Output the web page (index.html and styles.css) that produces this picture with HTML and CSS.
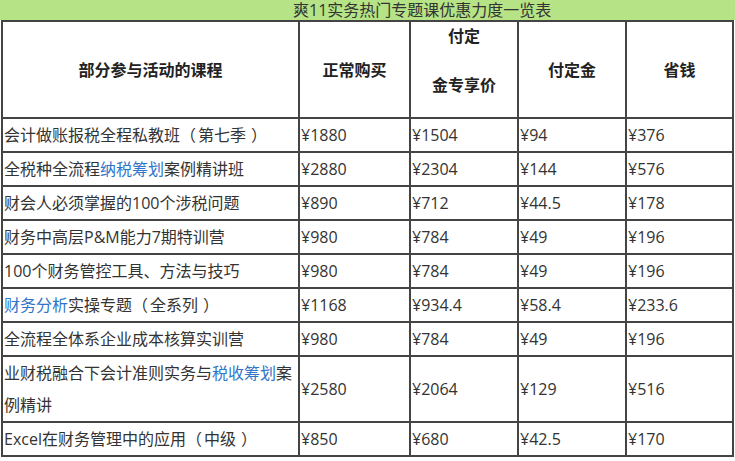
FILE: index.html
```html
<!DOCTYPE html>
<html lang="zh-CN">
<head>
<meta charset="utf-8">
<link rel="stylesheet" href="styles.css">
</head>
<body>
<div class="banner"><span class="banner-text">爽11实务热门专题课优惠力度一览表</span></div>
<table class="price-table">
  <colgroup>
    <col class="c1"><col class="c2"><col class="c3"><col class="c4"><col class="c5">
  </colgroup>
  <thead>
    <tr class="head-row">
      <th>部分参与活动的课程</th>
      <th>正常购买</th>
      <th class="two-line"><div class="l1">付定</div><div class="l2">金专享价</div></th>
      <th>付定金</th>
      <th>省钱</th>
    </tr>
  </thead>
  <tbody>
    <tr><td>会计做账报税全程私教班<span class="p-open">（</span>第七季<span class="p-close">）</span></td><td>¥1880</td><td>¥1504</td><td>¥94</td><td>¥376</td></tr>
    <tr><td>全税种全流程<span class="link">纳税筹划</span>案例精讲班</td><td>¥2880</td><td>¥2304</td><td>¥144</td><td>¥576</td></tr>
    <tr><td>财会人必须掌握的100个涉税问题</td><td>¥890</td><td>¥712</td><td>¥44.5</td><td>¥178</td></tr>
    <tr><td>财务中高层P&amp;M能力7期特训营</td><td>¥980</td><td>¥784</td><td>¥49</td><td>¥196</td></tr>
    <tr><td>100个财务管控工具、方法与技巧</td><td>¥980</td><td>¥784</td><td>¥49</td><td>¥196</td></tr>
    <tr><td><span class="link">财务分析</span>实操专题<span class="p-open">（</span>全系列<span class="p-close">）</span></td><td>¥1168</td><td>¥934.4</td><td>¥58.4</td><td>¥233.6</td></tr>
    <tr><td>全流程全体系企业成本核算实训营</td><td>¥980</td><td>¥784</td><td>¥49</td><td>¥196</td></tr>
    <tr><td>业财税融合下会计准则实务与<span class="link">税收筹划</span>案例精讲</td><td>¥2580</td><td>¥2064</td><td>¥129</td><td>¥516</td></tr>
    <tr><td>Excel在财务管理中的应用<span class="p-open">（</span>中级<span class="p-close">）</span></td><td>¥850</td><td>¥680</td><td>¥42.5</td><td>¥170</td></tr>
  </tbody>
</table>
</body>
</html>
```
FILE: styles.css
```css
html, body {
  margin: 0;
  padding: 0;
  background: #ffffff;
}
body {
  width: 735px;
  height: 461px;
  overflow: hidden;
  font-family: "Open Sans", "Noto Sans CJK SC", sans-serif;
  color: #333333;
}
.banner {
  height: 20px;
  background: #b5e385;
  font-size: 16px;
  line-height: 20px;
  padding-left: 293px;
  color: #333333;
  white-space: nowrap;
  overflow: hidden;
}
.price-table {
  margin-left: 1px;
  width: 733px;
  table-layout: fixed;
  border-collapse: separate;
  border-spacing: 0;
  border: 1px solid #444444;
  font-size: 16px;
}
.c1 { width: 297px; }
.c2 { width: 111px; }
.c3 { width: 108px; }
.c4 { width: 108px; }
.c5 { width: 107px; }
.price-table th,
.price-table td {
  border: 1px solid #444444;
  padding: 0 0 0 1px;
  line-height: 32px;
  vertical-align: middle;
}
.price-table th {
  font-weight: bold;
  color: #222222;
  text-align: center;
  height: 95px;
  padding: 0;
}
.price-table th.two-line {
  vertical-align: top;
}
.two-line .l1 {
  line-height: 32px;
  margin-top: -2px;
}
.two-line .l2 {
  line-height: 32px;
  margin-top: 17px;
}
.price-table td {
  height: 32px;
  text-align: left;
  color: #333333;
}
.link {
  color: #2f75c9;
}
.p-open {
  margin-right: 2px;
}
.p-close {
  margin-left: 5px;
}
```
